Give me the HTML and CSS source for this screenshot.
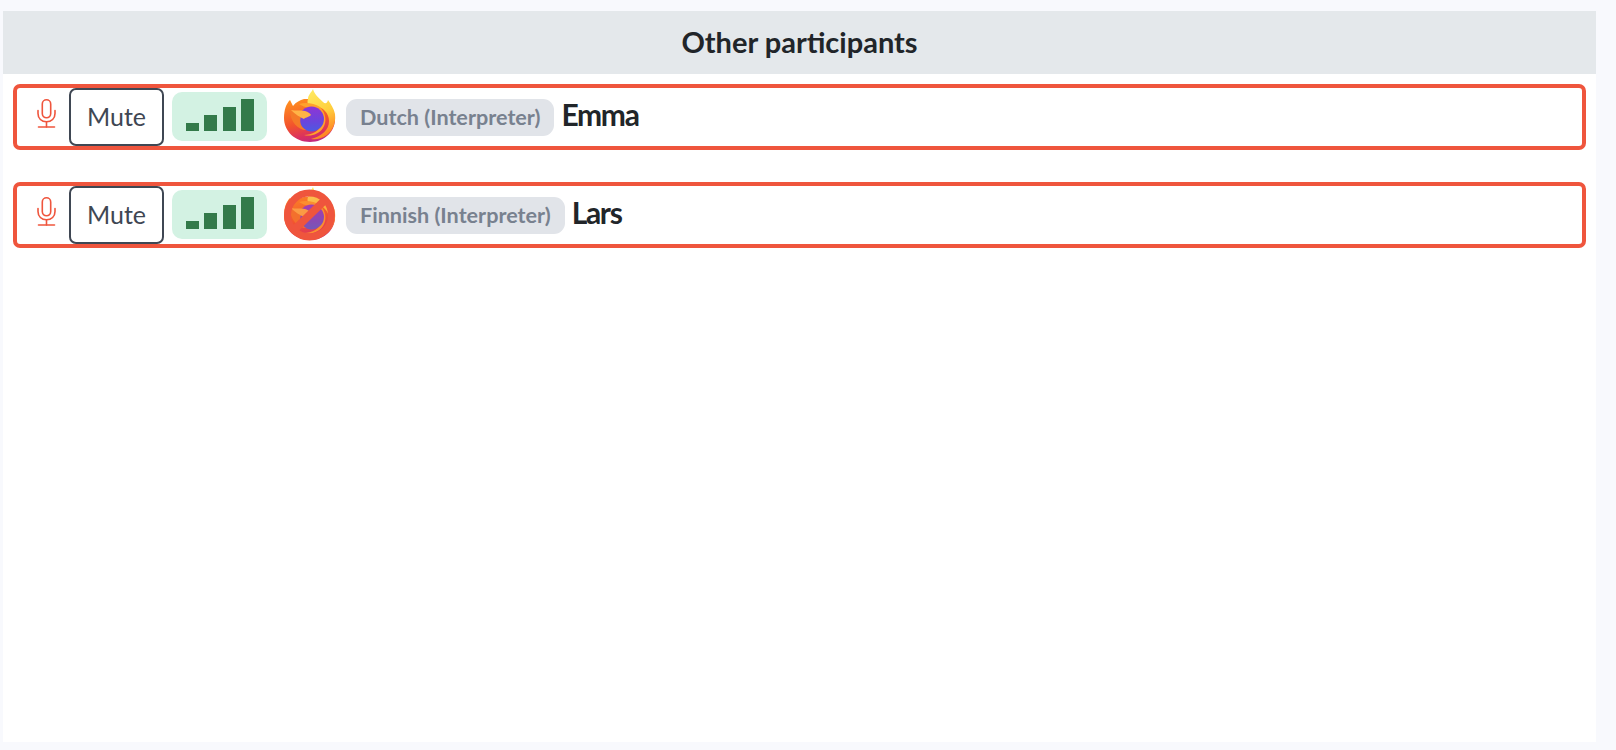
FILE: index.html
```html
<!DOCTYPE html>
<html lang="en">
<head>
  <meta charset="UTF-8">
  <title>Other participants</title>
  <link rel="stylesheet" href="styles.css">
</head>
<body>
  <svg class="defs" width="0" height="0">
    <defs>
      <linearGradient id="ffBody" x1="0.25" y1="0" x2="0.55" y2="1">
        <stop offset="0" stop-color="#ff8f1f"/>
        <stop offset="0.55" stop-color="#f2522d"/>
        <stop offset="0.85" stop-color="#d92f62"/>
        <stop offset="1" stop-color="#c02a80"/>
      </linearGradient>
      <linearGradient id="ffFlame" x1="0.3" y1="0" x2="0.6" y2="1">
        <stop offset="0" stop-color="#ffe85e"/>
        <stop offset="0.5" stop-color="#ffcf3d"/>
        <stop offset="1" stop-color="#ff7a1f"/>
      </linearGradient>
      <linearGradient id="ffGlobe" x1="0.5" y1="0" x2="0.5" y2="1">
        <stop offset="0" stop-color="#8f35d4"/>
        <stop offset="0.6" stop-color="#6a45dc"/>
        <stop offset="1" stop-color="#4c5ae2"/>
      </linearGradient>
      <symbol id="firefox" viewBox="0 0 52 54">
        <path fill="url(#ffBody)" d="M6 11 L9 17 C12 13 16 11 20 10 L30 10 L44 18 L51 28 C52 42 41 53 26 53 C11 53 0 42 0 29 C0 21 2 15 6 11Z"/>
        <path fill="url(#ffFlame)" d="M29 0 C30 5 35 9 39 13 C41 15 43 15 44 11 C47 15 50 20 51 25 C52 34 49 41 43 46 C37 50 32 51 27 50 C38 47 45 41 45 32 C45 24 39 18 31 17 C26 17 22 16 24 10 C24 6 27 4 29 0Z"/>
        <path fill="#ffa22b" d="M15 15 C21 13 30 14 36 18 C42 24 43 33 39 39 C35 45 27 48 20 46 C28 46 36 42 38 34 C40 26 33 20 26 19 C21 18 18 17 15 15Z"/>
        <circle fill="url(#ffGlobe)" cx="27.5" cy="30" r="12.5"/>
        <path fill="#f47a28" d="M6 21 C10 23 13 21 18 23 C16 25 15 26 17 28 C15 33 17 38 22 41 C14 41 6 33 6 21Z"/>
        <path fill="#ffb347" d="M7 21 C12 22 16 21 21 22 C24 23 26 24 27 26 C24 29 21 28 20 30 C16 28 12 26 7 21Z"/>
      </symbol>
      <symbol id="mic" viewBox="0 0 19 29">
        <g fill="none" stroke="#ef553d" stroke-width="1.6" stroke-linecap="round">
          <rect x="5.3" y="0.8" width="8.4" height="18" rx="4.2"/>
          <path d="M1 11.5 V14.5 C1 19.5 4.5 22.8 9.5 22.8 C14.5 22.8 18 19.5 18 14.5 V11.5"/>
          <path d="M9.5 22.8 V28"/>
          <path d="M1.5 28 H17.5"/>
        </g>
      </symbol>
    </defs>
  </svg>

  <section class="panel">
    <h2 class="panel-title">Other participants</h2>

    <div class="participant">
      <svg class="mic"><use href="#mic"/></svg>
      <button class="mute-btn">Mute</button>
      <div class="signal">
        <span class="bar bar-1"></span>
        <span class="bar bar-2"></span>
        <span class="bar bar-3"></span>
        <span class="bar bar-4"></span>
      </div>
      <div class="browser">
        <svg class="browser-icon"><use href="#firefox"/></svg>
      </div>
      <span class="lang-pill">Dutch (Interpreter)</span>
      <span class="name">Emma</span>
    </div>

    <div class="participant">
      <svg class="mic"><use href="#mic"/></svg>
      <button class="mute-btn">Mute</button>
      <div class="signal">
        <span class="bar bar-1"></span>
        <span class="bar bar-2"></span>
        <span class="bar bar-3"></span>
        <span class="bar bar-4"></span>
      </div>
      <div class="browser">
        <svg class="browser-icon"><use href="#firefox"/></svg>
        <svg class="blocked" viewBox="0 0 52 54">
          <circle cx="25.5" cy="28" r="22" fill="#ef553d" fill-opacity="0.25" stroke="#ef553d" stroke-width="7"/>
          <path d="M10 43 L41 13" stroke="#ef553d" stroke-width="8"/>
        </svg>
      </div>
      <span class="lang-pill">Finnish (Interpreter)</span>
      <span class="name">Lars</span>
    </div>
  </section>
</body>
</html>
```

FILE: styles.css
```css
* { margin: 0; padding: 0; box-sizing: border-box; }
html, body { height: 100%; }
body {
  font-family: Lato, Arial, sans-serif;
  background: #f8f9fd;
  color: #212529;
  padding: 11px 20px 8px 3px;
}
.defs { position: absolute; }

.panel { background: white; height: 100%; }
.panel-title {
  background: #e4e8eb;
  height: 63px;
  line-height: 62px;
  text-align: center;
  font-size: 29px;
  font-weight: 700;
  margin-bottom: 10px;
}

.participant {
  display: flex;
  align-items: center;
  height: 66px;
  margin: 0 10px 32px 10px;
  border: 4px solid #ef553d;
  border-radius: 7px;
}
.mic { width: 19px; height: 29px; margin-left: 20px; margin-right: 13px; margin-top: -8px; }
.mute-btn {
  width: 95px;
  height: 58px;
  background: white;
  border: 2px solid #3f4753;
  border-radius: 7px;
  color: #3f4753;
  font-family: Lato, Arial, sans-serif;
  font-size: 25px;
  padding-bottom: 2px;
  margin-right: 8px;
}

.signal {
  display: flex;
  align-items: flex-end;
  width: 95px;
  height: 49px;
  padding: 0 0 10px 14px;
  gap: 5.3px;
  background: #d3f2e3;
  border-radius: 10px;
  margin-right: 17px;
  margin-top: -2px;
}
.bar { width: 13px; background: #337a4a; }
.bar-1 { height: 8px; }
.bar-2 { height: 16px; }
.bar-3 { height: 24px; }
.bar-4 { height: 32px; }

.browser { position: relative; width: 52px; height: 54px; margin-right: 10px; margin-top: -2px; }
.browser-icon { display: block; width: 52px; height: 54px; }
.blocked { position: absolute; top: 0; left: 0; width: 52px; height: 54px; }

.lang-pill {
  background: #e1e4e9;
  color: #78818f;
  font-size: 21.6px;
  font-weight: 700;
  height: 37px;
  line-height: 36px;
  padding: 0 14px;
  border-radius: 11px;
  margin-right: 7px;
  margin-top: 1px;
}
.name {
  font-size: 30px;
  font-weight: 700;
  letter-spacing: -1.3px;
  margin-top: -7px;
}
```
